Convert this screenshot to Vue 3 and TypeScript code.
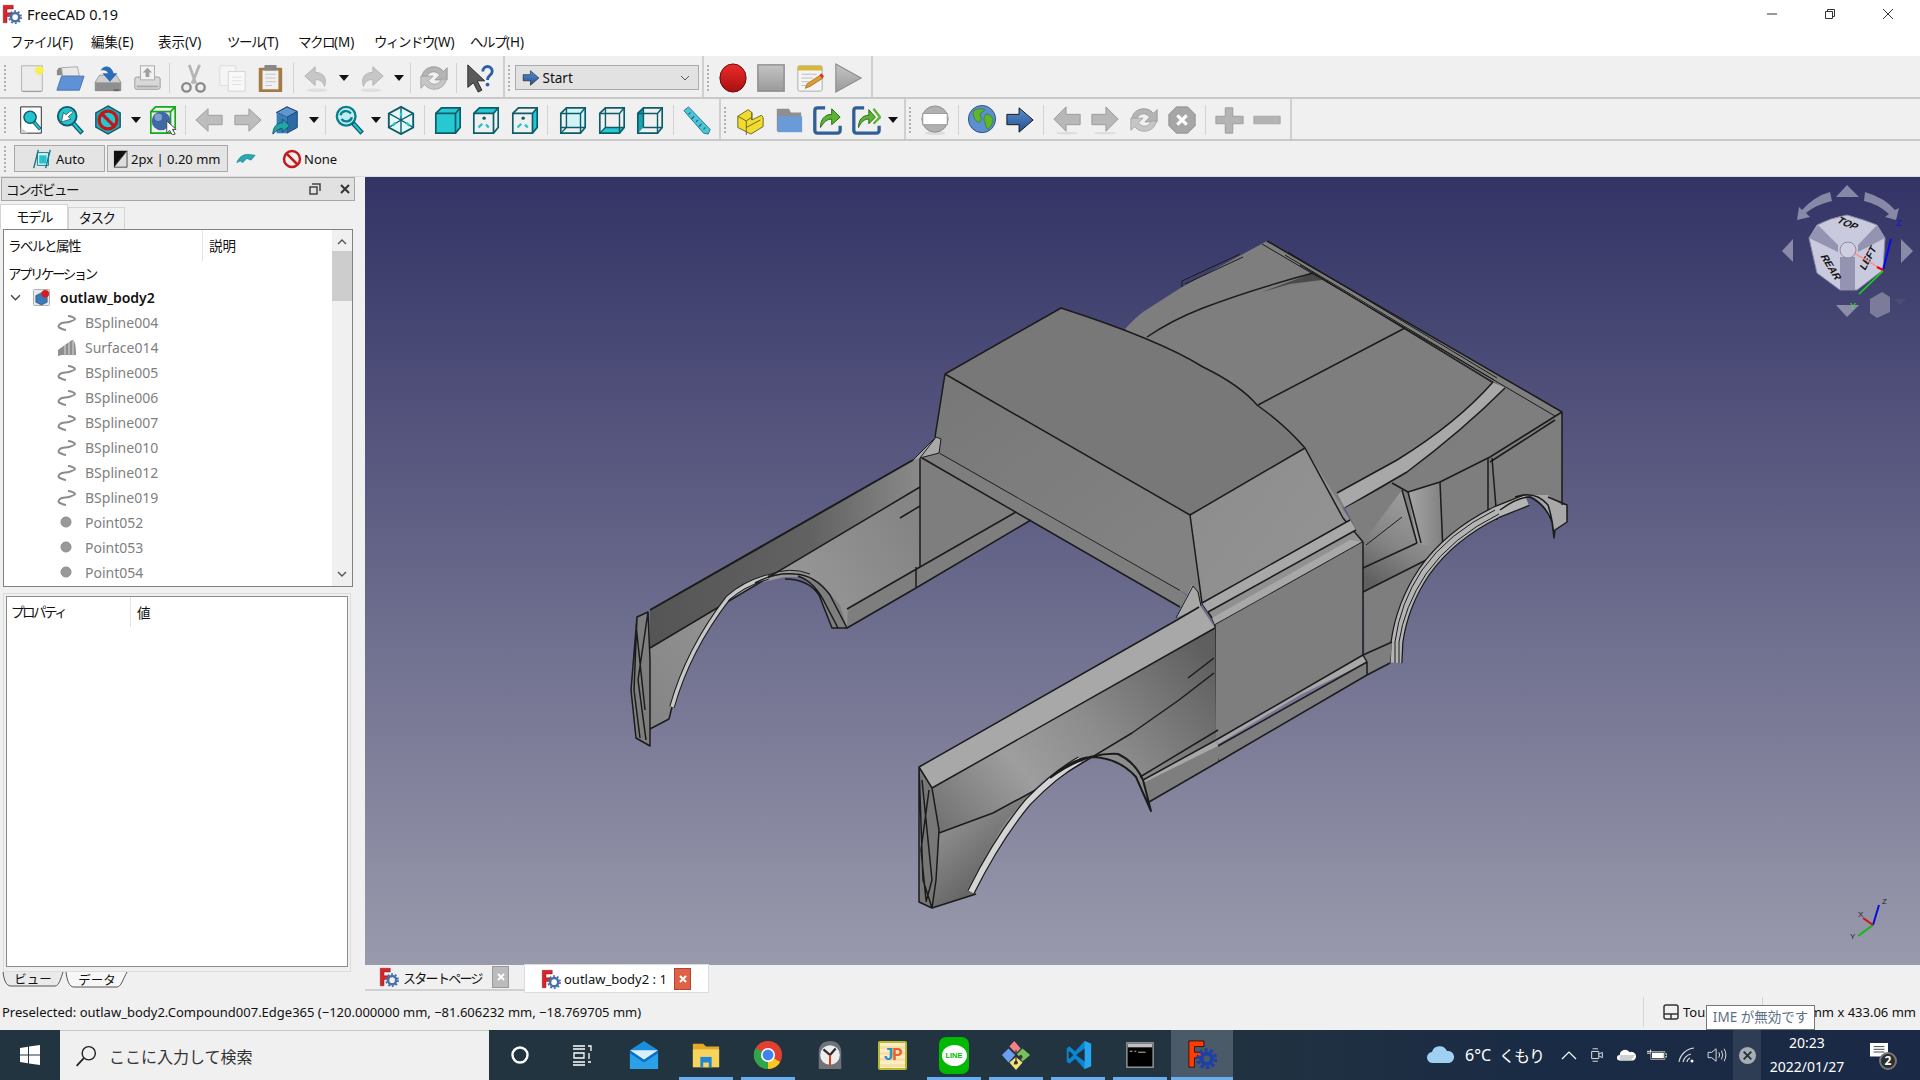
<template>
  <div class="app">
    <!-- sprite for toolbar icons -->
    <svg class="sprite" aria-hidden="true">
      <defs>
        <linearGradient id="redg" x1="0" y1="0" x2="0" y2="1"><stop offset="0" stop-color="#ee2b2b"/><stop offset="1" stop-color="#a80f0f"/></linearGradient>
        <linearGradient id="greyg" x1="0" y1="0" x2="0" y2="1"><stop offset="0" stop-color="#c4c4c4"/><stop offset="1" stop-color="#9a9a9a"/></linearGradient>
        <linearGradient id="blueg" x1="0" y1="0" x2="0" y2="1"><stop offset="0" stop-color="#5a8fcf"/><stop offset="1" stop-color="#24508f"/></linearGradient>

        <symbol id="new" viewBox="0 0 32 32"><rect x="6" y="3" width="22" height="27" fill="#ececec" stroke="#b0b0b0"/><path d="M7 30h20v1H7z" fill="#999"/><circle cx="25" cy="8" r="4.5" fill="#f5ef50"/></symbol>
        <symbol id="open" viewBox="0 0 32 32"><path d="M2 28V8l2-3h9l2 2h9v6H2z" fill="#8a8a8a"/><path d="M7 5l17-1 2 10H8z" fill="#e8e8e8" stroke="#aaa"/><path d="M2 29 7 14h24l-5 15z" fill="#5d92d6" stroke="#4874ad"/></symbol>
        <symbol id="save" viewBox="0 0 32 32"><path d="M2 21h28v9H2z" fill="#8f8f8f"/><path d="M7 13h18l5 8H2z" fill="#cfcfcf" stroke="#999"/><path d="M22 30h6v-2h-6z" fill="#666"/><path d="M8 8c4-7 12-5 14 3h4l-8 9-8-9h6c-1-3-4-4-8-3z" fill="#2a6cb6"/></symbol>
        <symbol id="saveas" viewBox="0 0 32 32"><rect x="3" y="15" width="27" height="13" rx="2" fill="#d8d8d8" stroke="#999"/><rect x="9" y="3" width="15" height="15" fill="#f2f2f2" stroke="#aaa"/><path d="M16.500 5l5 5h-3v5h-4v-5h-3z" fill="#a0a0a0"/><path d="M5 24h23v2H5z" fill="#aaa"/></symbol>
        <symbol id="cut" viewBox="0 0 32 32"><path d="M12 2l7 20M23 2l-8 20" stroke="#b5b5b5" stroke-width="3" fill="none"/><circle cx="9" cy="26" r="4.500" fill="none" stroke="#8a8a8a" stroke-width="2.500"/><circle cx="24" cy="26" r="4.500" fill="none" stroke="#8a8a8a" stroke-width="2.500"/></symbol>
        <symbol id="copy" viewBox="0 0 32 32"><rect x="3" y="3" width="17" height="21" fill="#f5f5f5" stroke="#dcdcdc"/><rect x="12" y="9" width="18" height="21" fill="#f8f8f8" stroke="#d4d4d4"/><path d="M16 15h10M16 19h10M16 23h10" stroke="#dedede"/></symbol>
        <symbol id="paste" viewBox="0 0 32 32"><rect x="4" y="5" width="25" height="26" rx="1" fill="#a57b45"/><rect x="8" y="8" width="17" height="20" fill="#f0f0f0"/><rect x="10" y="2" width="13" height="6" rx="1" fill="#888"/><path d="M11 12h11M11 16h11M11 20h11M11 24h7" stroke="#c2c2c2"/></symbol>
        <symbol id="undo" viewBox="0 0 32 32"><ellipse cx="16" cy="29" rx="11" ry="2" fill="#e0e0e0"/><path d="M14 4 3 14l11 10v-6c4-1 8 1 10 7 3-9-1-15-10-15z" fill="#c6c6c6" stroke="#b4b4b4"/></symbol>
        <symbol id="redo" viewBox="0 0 32 32"><ellipse cx="16" cy="29" rx="11" ry="2" fill="#e0e0e0"/><path d="M18 4l11 10-11 10v-6c-4-1-8 1-10 7-3-9 1-15 10-15z" fill="#c6c6c6" stroke="#b4b4b4"/></symbol>
        <symbol id="sync" viewBox="0 0 32 32"><path d="M3 15C4 4 19 0 26 9l4-4v13H17l5-5c-4-6-12-4-14 2z" fill="#b4b4b4" stroke="#999"/><path d="M29 17c-1 11-16 15-23 6l-4 4V14h13l-5 5c4 6 12 4 14-2z" fill="#c6c6c6" stroke="#a4a4a4"/></symbol>
        <symbol id="help" viewBox="0 0 32 32"><path d="M3 2v24l6-5 5 10 4-2-5-10h8z" fill="#5a5a5a" stroke="#2a2a2a"/><path d="M19 9c0-7 10-7 10 0 0 4-5 4-5 9" fill="none" stroke="#2d5fa5" stroke-width="3"/><circle cx="24" cy="23" r="2" fill="#2d5fa5"/></symbol>

        <symbol id="fitall" viewBox="0 0 32 32"><path d="M5 2h22v28H5z" fill="#fff" stroke="#222"/><path d="M5 24l8 6H5z" fill="#ccc"/><circle cx="15" cy="13" r="6.500" fill="#25c2cf" stroke="#0b5d69" stroke-width="1.500"/><path d="M19 18l7 8" stroke="#0b5d69" stroke-width="4"/><path d="M19.500 18.500l6 7" stroke="#25c2cf" stroke-width="2"/></symbol>
        <symbol id="fitsel" viewBox="0 0 32 32"><circle cx="13" cy="12" r="10" fill="#25c2cf" stroke="#0b5d69" stroke-width="2"/><path d="M19 19l10 11" stroke="#0b5d69" stroke-width="5"/><path d="M20 20l8 9" stroke="#25c2cf" stroke-width="2.500"/><path d="M7 18l2-10 2.500 2.500L17 6l2 2-5 4.500L17 15z" fill="#fff" stroke="#333" stroke-width=".7"/></symbol>
        <symbol id="nodraw" viewBox="0 0 32 32"><path d="M16 1l13 7.500v15L16 31 3 23.500v-15z" fill="#25a9b6" stroke="#0b5d69" stroke-width="1.500"/><circle cx="16" cy="16" r="9.500" fill="#22c8d4" stroke="#c01818" stroke-width="3.500"/><path d="M9 9l14 14" stroke="#c01818" stroke-width="3.500"/></symbol>
        <symbol id="boxsel" viewBox="0 0 32 32"><path d="M3 7h21v23H3zM3 7l5-5h21v22l-5 6M24 7l5-5" fill="none" stroke="#17a81c" stroke-width="1.800"/><circle cx="14" cy="17" r="10" fill="#3f68a4"/><circle cx="11" cy="13" r="4" fill="#7fa0cc"/><path d="M20 17v13l3-3 3 5 3-1-3-5h4z" fill="#fff" stroke="#444"/></symbol>
        <symbol id="larrow" viewBox="0 0 32 32"><path d="M15 4 2 16l13 12v-7h15V11H15z" fill="#bdbdbd" stroke="#9c9c9c"/></symbol>
        <symbol id="rarrow" viewBox="0 0 32 32"><path d="M17 4l13 12-13 12v-7H2V11h15z" fill="#bdbdbd" stroke="#9c9c9c"/></symbol>
        <symbol id="nav3d" viewBox="0 0 32 32"><path d="M6 8l11-6 11 5v17l-11 6V13z" fill="#2d6aa8" stroke="#1b416e"/><path d="M6 8l11 5 11-6-11-5z" fill="#5f96cf" stroke="#1b416e"/><path d="M17 13v17H6V8z" fill="#3f7cbe"/><path d="M2 31c0-7 4-12 10-12v-4l8 7-8 7v-4c-3 0-6 2-10 6z" fill="#22a6a8" stroke="#0d5b5f"/></symbol>
        <symbol id="syncview" viewBox="0 0 32 32"><circle cx="13" cy="12" r="10" fill="#bfeef2" stroke="#0b7f8d" stroke-width="2.500"/><path d="M20 19l10 11" stroke="#0b5d69" stroke-width="5"/><path d="M21 20l8 9" stroke="#25c2cf" stroke-width="2.500"/><path d="M7 11c1-5 8-6 11-2M19 13c-1 5-8 6-11 2" fill="none" stroke="#0b7f8d" stroke-width="2.500"/></symbol>
        <symbol id="iso" viewBox="0 0 32 32"><path d="M16 2l13 7v15l-13 7-13-7V9z" fill="#e6f7f8" stroke="#0b5d69" stroke-width="2"/><path d="M3 9l13 7 13-7M16 16v15M16 2v14M3 24l13-8 13 8" fill="none" stroke="#0b5d69" stroke-width="1.500"/><path d="M7 22l3-3M25 22l-3-3M16 8v4" stroke="#25c2cf" stroke-width="2.500"/></symbol>
        <symbol id="front" viewBox="0 0 32 32"><path d="M3 9l6-6h20v21l-5 6H3z" fill="#28c8d2" stroke="#0b5d69" stroke-width="1.800"/><path d="M3 9h21v21M24 9l5-6" fill="none" stroke="#0b5d69" stroke-width="1.800"/></symbol>
        <symbol id="top" viewBox="0 0 32 32"><path d="M3 9l6-6h20l-5 6z" fill="#28c8d2"/><path d="M3 9l6-6h20v21l-5 6H3z" fill="none" stroke="#0b5d69" stroke-width="1.800"/><path d="M3 9h21v21M24 9l5-6" fill="none" stroke="#0b5d69" stroke-width="1.800"/><circle cx="14" cy="14" r="1.800" fill="#0b5d69"/><path d="M8 24l4-4M19 24l-3-3" stroke="#25c2cf" stroke-width="2.500"/></symbol>
        <symbol id="right" viewBox="0 0 32 32"><path d="M24 9l5-6v21l-5 6z" fill="#28c8d2"/><path d="M3 9l6-6h20v21l-5 6H3z" fill="none" stroke="#0b5d69" stroke-width="1.800"/><path d="M3 9h21v21M24 9l5-6" fill="none" stroke="#0b5d69" stroke-width="1.800"/><circle cx="14" cy="14" r="1.800" fill="#0b5d69"/><path d="M8 24l4-4M19 24l-3-3" stroke="#25c2cf" stroke-width="2.500"/></symbol>
        <symbol id="rear" viewBox="0 0 32 32"><path d="M9 3h20v21H9z" fill="#d3f4f6"/><path d="M3 9l6-6h20v21l-5 6H3z" fill="none" stroke="#0b5d69" stroke-width="1.800"/><path d="M3 9h21v21M24 9l5-6M9 3v21H3M9 24l-6 6M9 24h20" fill="none" stroke="#0b5d69" stroke-width="1.500"/></symbol>
        <symbol id="bottom" viewBox="0 0 32 32"><path d="M3 30l6-6h20l-5 6z" fill="#28c8d2"/><path d="M3 9l6-6h20v21l-5 6H3z" fill="none" stroke="#0b5d69" stroke-width="1.800"/><path d="M3 9h21v21M24 9l5-6M9 3v21M9 24h20M9 24l-6 6" fill="none" stroke="#0b5d69" stroke-width="1.500"/></symbol>
        <symbol id="leftv" viewBox="0 0 32 32"><path d="M3 9l6-6v21l-6 6z" fill="#1ba3ad"/><path d="M3 9l6-6h20v21l-5 6H3z" fill="none" stroke="#0b5d69" stroke-width="1.800"/><path d="M3 9h21v21M24 9l5-6M9 3v21M9 24h20" fill="none" stroke="#0b5d69" stroke-width="1.500"/></symbol>
        <symbol id="measure" viewBox="0 0 32 32"><path d="M2 6l5-4 23 24-2 5-5-1z" fill="#4fc3d8" stroke="#1c7b92"/><path d="M9 8l-2 2M13 12l-3 3M17 16l-2 2M21 20l-3 3M25 24l-2 2" stroke="#146a80" stroke-width="1.200"/></symbol>
        <symbol id="part" viewBox="0 0 32 32"><path d="M3 12l11-7 4 3v8l10-5 2 2v10l-13 8-14-7z" fill="#f0db30" stroke="#6b6420"/><path d="M3 12l9 5v15M12 17l6-4M12 24l15-8M18 8v8" fill="none" stroke="#6b6420"/></symbol>
        <symbol id="folder" viewBox="0 0 32 32"><path d="M3 28V4h13l2 4h11v20z" fill="#8f8f8f"/><path d="M4 12h26v17H4z" fill="#6a9bd8"/></symbol>
        <symbol id="link" viewBox="0 0 32 32"><path d="M14 3H6Q3 3 3 6v21q0 3 3 3h21q3 0 3-3v-5" fill="none" stroke="#2f5f94" stroke-width="3.500"/><path d="M9 24c0-8 4-14 12-14V4l9 9-9 8v-6c-5 0-8 3-12 9z" fill="#5cb531" stroke="#2a6414"/></symbol>
        <symbol id="link2" viewBox="0 0 32 32"><path d="M14 3H6Q3 3 3 6v21q0 3 3 3h21q3 0 3-3v-5" fill="none" stroke="#2f5f94" stroke-width="3.500"/><path d="M8 24c0-8 4-13 11-13V5l7 8-7 7v-5c-5 0-8 3-11 9z" fill="#5cb531" stroke="#2a6414"/><path d="M24 4l7 9-7 7" fill="none" stroke="#5cb531" stroke-width="2.500"/></symbol>
        <symbol id="web" viewBox="0 0 32 32"><ellipse cx="16" cy="30" rx="11" ry="2" fill="#dcdcdc"/><circle cx="16" cy="15" r="14" fill="#b0b0b0" stroke="#8c8c8c"/><rect x="3" y="9" width="26" height="12" fill="#fff" stroke="#999"/></symbol>
        <symbol id="globe" viewBox="0 0 32 32"><circle cx="16" cy="15" r="14.500" fill="#5d8fd0" stroke="#2c4e80"/><path d="M7 6c4-2 8-3 12-1-1 3-5 2-5 5s2 3 1 6-4 3-6 0-3-6-2-10zM20 10c3-1 7 2 8 6-1 5-3 8-6 10-3-3-2-8-4-10 0-3 1-5 2-6z" fill="#5db62c" stroke="#2f6b14" stroke-width=".6"/></symbol>
        <symbol id="go" viewBox="0 0 32 32"><path d="M15 3l15 13-15 13v-8H2V10h13z" fill="url(#blueg)" stroke="#111"/></symbol>
        <symbol id="back" viewBox="0 0 32 32"><path d="M15 2 2 15l13 13v-7h15V10H15z" fill="#b8b8b8" stroke="#999"/><ellipse cx="16" cy="30" rx="12" ry="1.500" fill="#ddd"/></symbol>
        <symbol id="fwd" viewBox="0 0 32 32"><path d="M17 2l13 13-13 13v-7H2V10h15z" fill="#b8b8b8" stroke="#999"/><ellipse cx="16" cy="30" rx="12" ry="1.500" fill="#ddd"/></symbol>
        <symbol id="stop" viewBox="0 0 32 32"><path d="M10 2h12l8 8v12l-8 8H10l-8-8V10z" fill="#a6a6a6" stroke="#8c8c8c"/><path d="M11 11l10 10M21 11 11 21" stroke="#fff" stroke-width="3.500"/></symbol>
        <symbol id="plus" viewBox="0 0 32 32"><path d="M12 3h8v9h11v8H20v10h-8V20H2v-8h10z" fill="#b4b4b4" stroke="#9a9a9a"/></symbol>
        <symbol id="minus" viewBox="0 0 32 32"><path d="M2 12h28v8H2z" fill="#b4b4b4" stroke="#a4a4a4"/></symbol>
        <symbol id="record" viewBox="0 0 32 32"><ellipse cx="16" cy="16" rx="14" ry="15" fill="url(#redg)" stroke="#5e0a0a"/></symbol>
        <symbol id="halt" viewBox="0 0 32 32"><rect x="2" y="2" width="28" height="28" fill="url(#greyg)" stroke="#8d8d8d" stroke-width="1.500"/></symbol>
        <symbol id="macro" viewBox="0 0 32 32"><rect x="3" y="3" width="26" height="27" rx="2" fill="#f4f4f4" stroke="#aaa"/><path d="M3 3h26v5H3z" fill="#d6b93c"/><path d="M7 12h16M7 16h12M7 20h8M7 24h6" stroke="#bbb"/><path d="M11 27l2-5 14-9 3 3-14 9z" fill="#e49a2c" stroke="#8a5a14" stroke-width=".7"/><path d="M26 13l3 3 2-2-3-3z" fill="#d83030"/></symbol>
        <symbol id="play" viewBox="0 0 32 32"><path d="M3 1l27 15L3 31z" fill="url(#greyg)" stroke="#8d8d8d" stroke-width="1.200"/></symbol>
        <symbol id="fclogo" viewBox="0 0 32 32"><path d="M2 2h16v6H8v6h8v6H8v10H2z" fill="#d8252c" stroke="#7a1015" stroke-width=".7"/><circle cx="21" cy="21" r="6.500" fill="none" stroke="#4a70a8" stroke-width="4"/><circle cx="21" cy="21" r="9.500" fill="none" stroke="#4a70a8" stroke-width="3" stroke-dasharray="3 3"/></symbol>
      </defs>
    </svg>

    <header class="title">
      <svg class="title-logo" viewBox="0 0 32 32"><use href="#fclogo"/></svg>
      <span class="title-text">FreeCAD 0.19</span>
      <div class="win-btns">
        <svg viewBox="0 0 12 12"><path d="M1 6h10" stroke="#333"/></svg>
        <svg viewBox="0 0 12 12"><path d="M1.500 3.500h7v7h-7zM3.500 3.500v-2h7v7h-2" fill="none" stroke="#333"/></svg>
        <svg viewBox="0 0 12 12"><path d="M1 1l10 10M11 1 1 11" stroke="#333"/></svg>
      </div>
    </header>

    <nav class="menu">
      <span v-for="m in menus" :key="m.t" class="menu-item"><span :class="{ mkana: m.kana }">{{ m.t }}</span>{{ m.s }}</span>
    </nav>

    <div v-for="(row, r) in toolRows" :key="r" class="toolbar" :class="'toolbar' + r">
      <div v-for="(grp, g) in row" :key="g" class="tgroup">
        <i class="grip"></i>
        <template v-for="(t, i) in grp" :key="i">
          <i v-if="t === '|'" class="sep"></i>
          <i v-else-if="t === '||'" class="sep sep-wide"></i>
          <i v-else-if="t === 'v'" class="drop"></i>
          <i v-else-if="t === 'w'" class="drop drop-narrow"></i>
          <div v-else-if="t === 'combo'" class="combo">
            <svg viewBox="0 0 32 32"><use href="#go"/></svg>
            <span>Start</span>
            <svg class="chev" viewBox="0 0 10 6"><path d="M1 1l4 4 4-4" fill="none" stroke="#555"/></svg>
          </div>
          <span v-else class="tool"><svg viewBox="0 0 32 32"><use :href="'#' + t"/></svg></span>
        </template>
      </div>
    </div>

    <div class="drawbar">
      <i class="grip"></i>
      <div class="dbtn dbtn-auto">
        <svg viewBox="0 0 24 24"><path d="M7 5h12v14H7z" fill="#d8f1f3" stroke="#0f7784"/><path d="M3 22 8 2M16 22l5-20" stroke="#0f7784" stroke-width="1.500"/><path d="M9 8h8v9H9z" fill="#25c2cf"/></svg>
        <span>Auto</span>
      </div>
      <div class="dbtn dbtn-line">
        <svg viewBox="0 0 18 22"><path d="M1 1h16L1 21z" fill="#111"/><path d="M17 1v20H1z" fill="#ddd" stroke="#333"/></svg>
        <span>2px | 0.20 mm</span>
      </div>
      <svg class="bolt" viewBox="0 0 24 14"><path d="M1 12c2-6 7-10 13-10l9 1-5 6-5-2-5 5-3-2z" fill="#25aab5" stroke="#11727c" stroke-width=".6"/></svg>
      <svg class="none-ic" viewBox="0 0 20 20"><circle cx="10" cy="10" r="8" fill="none" stroke="#c41a1a" stroke-width="2.500"/><path d="M4.500 4.500l11 11" stroke="#c41a1a" stroke-width="2.500"/></svg>
      <span class="none-tx">None</span>
    </div>

    <main class="work">
      <aside class="side">
        <div class="dock-title">
          <span class="kana-w">コンボビュー</span>
          <svg class="dock-float" viewBox="0 0 12 12"><path d="M3 1h8v7M1 4h7v7H1z M1 4h7" fill="none" stroke="#444" stroke-width="1.500"/></svg>
          <svg class="dock-close" viewBox="0 0 12 12"><path d="M2 2l8 8M10 2l-8 8" stroke="#333" stroke-width="2"/></svg>
        </div>
        <div class="tabs">
          <span class="tab tab-on kana-w">モデル</span>
          <span class="tab kana-w">タスク</span>
        </div>
        <section class="tree">
          <div class="tree-main">
            <div class="tree-head">
              <span class="th-label kana-w">ラベルと属性</span>
              <span class="th-desc">説明</span>
            </div>
            <div class="row row-app kana">アプリケーション</div>
            <div class="row row-doc">
              <svg class="twist" viewBox="0 0 10 6"><path d="M1 1l4 4 4-4" fill="none" stroke="#444" stroke-width="1.300"/></svg>
              <svg class="doc-ic" viewBox="0 0 18 18"><rect x=".5" y=".5" width="17" height="17" rx="1" fill="#e8e8e8" stroke="#aaa"/><path d="M3 7l6-3 6 3v7l-6 3-6-3z" fill="#3d78b8" stroke="#20466f" stroke-width=".6"/><circle cx="13" cy="5" r="4" fill="#d41e1e"/></svg>
              <span>outlaw_body2</span>
            </div>
            <div v-for="n in nodes" :key="n" class="row row-node">
              <svg v-if="n.startsWith('BSpline')" class="node-ic" viewBox="0 0 20 18"><path d="M11 2c3 0 7 2 7 3s-3 2-6 3-7 0-9 2-2 3 0 4 4 2 6 2" fill="none" stroke="#8c8c8c" stroke-width="2"/></svg>
              <svg v-else-if="n.startsWith('Surface')" class="node-ic" viewBox="0 0 20 18"><path d="M1 11l4-3 10-7c3 0 4 6 4 15H5L1 17z" fill="#8f8f8f"/><path d="M8 6v11M12 3v14M16 2v15" stroke="#dcdcdc"/></svg>
              <svg v-else class="node-ic" viewBox="0 0 20 18"><circle cx="9" cy="8" r="5" fill="#999" stroke="#8a8a8a"/></svg>
              <span>{{ n }}</span>
            </div>
          </div>
          <div class="sbar">
            <svg viewBox="0 0 10 6"><path d="M1 5l4-4 4 4" fill="none" stroke="#555" stroke-width="1.400"/></svg>
            <div class="sb-track"><div class="sb-thumb"></div></div>
            <svg viewBox="0 0 10 6"><path d="M1 1l4 4 4-4" fill="none" stroke="#555" stroke-width="1.400"/></svg>
          </div>
        </section>
        <section class="props">
          <div class="props-in">
            <div class="props-head">
              <span class="ph-a kana">プロパティ</span>
              <span class="ph-b">値</span>
            </div>
          </div>
        </section>
        <svg class="btabs" viewBox="0 0 135 18">
          <path d="M3 0c1 8 3 14 8 14h44c4 0 6-8 8-14" fill="#eaeaea" stroke="#555"/>
          <path d="M66 0c1 8 3 15 8 15h43c4 0 6-8 10-15" fill="#f7f7f7" stroke="#555"/>
          <text x="33" y="12" text-anchor="middle" class="btab-t">ビュー</text>
          <text x="97" y="13" text-anchor="middle" class="btab-t">データ</text>
        </svg>
      </aside>

      <div class="mdi">
        <div class="view">
          <!-- the model and nav cube are free canvas content -->
          <svg class="canvas" viewBox="365 177 1555 788">
            <defs>
              <linearGradient id="lfTop" gradientUnits="userSpaceOnUse" x1="650" y1="0" x2="920" y2="0"><stop offset="0" stop-color="#555"/><stop offset=".6" stop-color="#626262"/><stop offset="1" stop-color="#8a8a8a"/></linearGradient>
              <linearGradient id="lfLow" gradientUnits="userSpaceOnUse" x1="650" y1="700" x2="920" y2="540"><stop offset="0" stop-color="#868686"/><stop offset=".5" stop-color="#9a9a9a"/><stop offset="1" stop-color="#858585"/></linearGradient>
              <linearGradient id="ffLow" gradientUnits="userSpaceOnUse" x1="960" y1="880" x2="1214" y2="660"><stop offset="0" stop-color="#6a6a6a"/><stop offset=".35" stop-color="#9e9e9e"/><stop offset=".6" stop-color="#8c8c8c"/><stop offset="1" stop-color="#5f5f5f"/></linearGradient>
              <linearGradient id="ffLowB" gradientUnits="userSpaceOnUse" x1="945" y1="830" x2="995" y2="890"><stop offset="0" stop-color="#8c8c8c"/><stop offset="1" stop-color="#5e5e5e"/></linearGradient>
              <linearGradient id="roofG" gradientUnits="userSpaceOnUse" x1="1060" y1="310" x2="1200" y2="510"><stop offset="0" stop-color="#787878"/><stop offset="1" stop-color="#828282"/></linearGradient>
              <linearGradient id="cabF" gradientUnits="userSpaceOnUse" x1="1200" y1="520" x2="1340" y2="620"><stop offset="0" stop-color="#8e8e8e"/><stop offset="1" stop-color="#949494"/></linearGradient>
              <linearGradient id="rqG" gradientUnits="userSpaceOnUse" x1="1375" y1="585" x2="1420" y2="510"><stop offset="0" stop-color="#606060"/><stop offset=".5" stop-color="#858585"/><stop offset="1" stop-color="#9a9a9a"/></linearGradient>
              <linearGradient id="rwG" gradientUnits="userSpaceOnUse" x1="1405" y1="500" x2="1445" y2="500"><stop offset="0" stop-color="#aaa"/><stop offset="1" stop-color="#7e7e7e"/></linearGradient>
            </defs>

            <!-- rear deck -->
            <path class="fill-m" d="M1125 329 Q1135 318 1143 312 L1182 287 L1267 241 L1562 412 L1490 457 L1440 482 L1408 492 L1392 483 L1345 508 L1300 500 L1200 400 Z"/>
            <path class="line thin" d="M1182 287 V281 L1240 254 M1185 284 L1243 257"/>
            <path class="fill-d" d="M1262 292 L1313 273 L1322 280 L1290 284 Z"/>
            <path class="line" d="M1147 337 Q1172 320 1203 308 Q1250 290 1313 273"/>
            <path class="line thin" d="M1285 255 L1494 380 M1288 252 L1497 378 M1313 273 L1493 383 M1300 265 L1498 385 M1262 244 L1555 416"/>
            <path class="line" d="M1258 405 L1405 328"/>
            <path class="fill-l" d="M1493 382 Q1457 423 1397 460 L1337 493 L1345 508 L1407 472 Q1463 430 1505 388 Z"/>
            <path class="line" d="M1493 382 Q1457 423 1397 460 L1337 493 M1505 388 Q1463 430 1407 472 L1345 508"/>

            <!-- rear quarter -->
            <path class="fill-m" d="M1490 457 L1562 412 V505 L1530 495 L1497 512 L1457 537 L1424 572 L1402 605 L1396 642 L1365 655 L1363 542 L1345 508 L1392 483 L1408 492 L1440 482 Z"/>
            <path d="M1363 542 L1402 490 L1417 543 L1363 568 Z" fill="url(#rqG)"/>
            <path d="M1408 492 L1440 482 L1443 552 L1417 543 Z" fill="url(#rwG)"/>
            <path d="M1363 568 L1417 543 L1442 552 L1363 592 Z" fill="url(#rqG)"/>
            <path class="line" d="M1267 241 L1562 412 L1490 457 L1440 482 L1408 492 L1392 483 M1562 412 V505"/>
            <path class="line" d="M1402 490 L1417 543 M1408 492 L1421 543 M1363 568 L1417 543 M1363 592 L1442 552 M1440 482 L1443 552 M1488 458 V520 M1492 458 L1497 520 M1490 462 L1555 420"/>
            <path class="line thin" d="M1366 545 L1402 517"/>

            <!-- rear wheel arch -->
            <path class="bar-o" d="M1396 663 L1397 642 Q1402 605 1424 572 Q1450 535 1497 512 L1527 500"/>
            <path class="bar-i" d="M1396 663 L1397 642 Q1402 605 1424 572 Q1450 535 1497 512 L1527 500"/>
            <path class="line thin" d="M1395 663 L1395 642 Q1400 603 1422 570 Q1448 533 1495 510 M1399 663 L1399 642 Q1404 607 1426 574 Q1452 537 1499 514"/>
            <path class="fill-l" d="M1562 505 L1567 505 V522 L1555 530 L1554 538 L1552 522 Q1548 505 1530 495 L1548 495 Z"/>
            <path class="line" d="M1548 497 L1567 505 V522 L1555 530 L1554 538 L1552 522 Q1546 505 1530 497 Q1518 497 1500 510 M1515 497 Q1535 490 1548 505 Q1553 520 1554 538"/>
            <path class="fill-m" d="M1363 655 L1392 642 L1390 663 L1367 675 Z"/>
            <path class="line" d="M1363 655 L1392 642 M1390 663 L1367 675"/>

            <!-- left side inner wall -->
            <path class="fill-m" d="M920 458 L939 453 L1180 590 L1200 610 L1180 607 L1031 520 L916 588 Z"/>
            <path class="line" d="M922 458 L1180 607 M940 453 L1180 590 M920 567 L1016 512 M916 588 L1031 520"/>

            <!-- left fender -->
            <path d="M650 610 L913 460 L920 458 L920 487 L650 648 Z" fill="url(#lfTop)"/>
            <path d="M650 648 L920 487 L920 567 L916 588 L847 628 L832 627 L819 593 L802 577 H785 L750 585 L728 598 L702 637 L681 677 L672 707 L669 719 L648 730 Z" fill="url(#lfLow)"/>
            <path class="fill-m" d="M847 628 L916 588 L920 567 L848 609 Z"/>
            <path class="line heavy" d="M650 610 L913 460"/>
            <path class="line" d="M650 648 L920 487 M920 458 V567 M916 567 V588 M847 628 L916 588 M847 609 L920 567 M900 518 L920 506"/>
            <path class="bar-o thin-bar" d="M672 707 Q688 650 728 598 Q745 583 768 577"/>
            <path class="bar-i thin-bar" d="M672 707 Q688 650 728 598 Q745 583 768 577"/>
            <path class="fill-m" d="M802 577 L819 593 L832 627 L847 628 L840 605 L820 582 Z"/>
            <path class="line" d="M669 719 L648 730 M669 719 L672 707 M755 583 Q775 572 795 574 Q815 575 830 595 L847 628 H832 L819 595 Q808 579 785 579 M798 576 Q815 582 826 605 L838 628"/>
            <path class="line thin" d="M768 575 Q790 566 810 574"/>
            <path class="fill-m" d="M637 617 L648 612 L650 660 V746 L636 738 L631 690 Z"/>
            <path class="line" d="M637 617 L648 612 L650 660 V746 L636 738 L631 690 Z M637 617 L634 690 L640 738 M648 612 L638 680 L646 740 M636 625 L645 710"/>

            <!-- cabin -->
            <path d="M935 437 L945 374 L1190 515 L1202 603 L1180 590 L940 453 Z" fill="url(#roofG)"/>
            <path d="M1061 308 Q1160 340 1203 367 Q1240 385 1257 405 L1305 448 L1190 515 L945 374 Z" fill="#787878"/>
            <path d="M1190 515 L1305 448 L1350 520 L1363 542 L1215 625 L1212 618 L1202 603 Z" fill="url(#cabF)"/>
            <path class="line" d="M945 374 L1061 308 Q1160 340 1203 367 Q1240 385 1257 405 Q1285 425 1305 448 L1190 515 L945 374 L935 437 M1190 515 L1202 603 L1212 618 L1215 625 M1305 448 L1343 518 L1363 542"/>
            <path class="fill-l" d="M936 437 L941 439 L939 453 L913 460 Z"/>
            <path class="line thin" d="M936 437 L941 439 L939 453 L920 458 Z M936 437 L913 460"/>
            <path class="fill-l" d="M1197 590 L1192 585 L1176 618 L1201 607 Z"/>
            <path class="line thin" d="M1193 586 L1198 592 L1201 606 M1193 586 L1176 618"/>

            <!-- cabin side strip -->
            <path class="fill-l" d="M1212 618 L1350 540 L1363 542 L1215 625 Z"/>
            <path class="fill-l" d="M1202 603 L1350 520 L1356 530 L1208 612 Z"/>
            <path class="line" d="M1202 603 L1350 520 M1208 612 L1356 530 M1215 625 L1363 542"/>

            <!-- front door -->
            <path class="fill-m" d="M1215 625 L1363 542 V655 L1215 740 Z"/>
            <path class="fill-l" d="M1216 740 L1363 655 L1367 662 L1300 695 L1218 744 Z"/>
            <path class="fill-m" d="M1218 746 L1367 662 V675 L1218 762 Z"/>
            <path class="line" d="M1215 625 V740 L1218 762 M1363 542 V655 L1367 662 V675 M1216 740 L1363 655 M1218 746 L1367 662 M1218 762 L1367 675"/>

            <!-- front fender -->
            <path class="fill-l" d="M919 767 L1177 620 L1201 607 L1215 628 L932 788 Z"/>
            <path d="M932 788 L1215 628 L1216 740 L1143 780 L1151 811 L1136 777 Q1119 758 1088 758 Q1054 766 1023 800 Q1000 830 976 873 L967 890 L976 894 L932 908 L936 880 L937 830 Z" fill="url(#ffLow)"/>
            <path d="M939 833 L993 813 L1054 780 Q1020 800 1000 830 L976 873 L967 890 L976 894 L932 908 L936 880 Z" fill="url(#ffLowB)"/>
            <path class="fill-l" d="M1143 780 L1216 740 L1218 746 L1149 802 Z"/>
            <path class="fill-m" d="M1149 802 L1218 762 L1218 746 L1143 783 Z"/>
            <path class="line" d="M919 767 L1177 620 L1199 607 M932 788 L1215 628 M939 833 L993 813 L1054 780 L1132 733 L1179 700 L1214 673 M1188 678 L1214 658"/>
            <path class="bar-o mid-bar" d="M971 892 Q998 838 1028 802 Q1055 774 1080 760"/>
            <path class="bar-i mid-bar pale" d="M971 892 Q998 838 1028 802 Q1055 774 1080 760"/>
            <path class="line heavy" d="M1050 778 Q1085 752 1118 754 Q1135 762 1143 780 L1151 811 L1136 777 Q1119 758 1092 757 Q1075 757 1050 778"/>
            <path class="line" d="M1143 780 L1216 740 M1149 802 L1218 762 M1140 777 L1218 730"/>
            <path d="M919 767 L932 788 L939 830 L936 880 L932 908 L919 902 Z" fill="#777"/>
            <path class="line" d="M919 767 L932 788 L939 830 L936 880 L932 908 L919 902 Z M976 894 L932 908 M919 767 L923 880 L932 908 M922 780 L932 880 L926 902 M929 790 L921 850 L926 900"/>

            <!-- nav cube -->
            <g class="nav">
              <path d="M1847 185 L1836 197 H1859 Z M1782 251 L1793 239 V262 Z M1913 251 L1901 239 V263 Z M1847 317 L1836 305 H1859 Z"/>
              <path d="M1830 192 L1832 201 Q1815 205 1806 213 L1810 217 L1797 220 L1799 207 L1802 210 Q1815 196 1830 192 Z"/>
              <path d="M1865 192 Q1885 198 1895 210 L1899 208 L1896 220 L1885 217 L1889 214 Q1878 204 1864 201 Z"/>
            </g>
            <path class="cube" d="M1847 215 Q1865 220 1877 225 L1885 238 L1883 270 L1857 290 H1840 L1817 273 L1809 238 L1817 225 Q1830 218 1847 215 Z"/>
            <path class="cube-band" d="M1809 238 L1818 225 L1838 245 V252 Z M1877 225 L1885 238 L1858 252 V245 Z M1840 290 H1855 V257 H1840 Z"/>
            <circle cx="1848" cy="250" r="8" class="cube-hub"/>
            <text class="cube-t" transform="translate(1836 222) rotate(24) skewX(-20)">TOP</text>
            <text class="cube-t" transform="translate(1820 256) rotate(58) skewX(-20)">REAR</text>
            <text class="cube-t" transform="translate(1865 271) rotate(-62) skewX(-10)">LEFT</text>
            <path d="M1883 270 L1891 239" stroke="#0a0aee" stroke-width="2"/>
            <path d="M1883 271 L1859 294" stroke="#0ee60e" stroke-width="1.400"/>
            <path d="M1854 253 L1883 270" stroke="#ff8a8a" stroke-width="1.400"/>
            <path d="M1877 267 L1883 270" stroke="#e00" stroke-width="2"/>
            <text x="1896" y="226" class="axis-t blue">Z</text>
            <text x="1850" y="309" class="axis-t green">Y</text>
            <path d="M1870 299 L1882 292 L1890 297 V312 L1877 318 L1870 313 Z" fill="#7c7c9a"/>
            <path d="M1894 299 H1906 L1900 305 Z" fill="#4d4d6e"/>

            <!-- axis cross -->
            <path d="M1873 925 L1879 905" stroke="#0c0cd8" stroke-width="2"/>
            <path d="M1873 925 L1858 936" stroke="#11b911" stroke-width="2"/>
            <path d="M1873 925 L1863 918" stroke="#cf1111" stroke-width="2"/>
            <text x="1882" y="904" class="axis-s">Z</text>
            <text x="1850" y="939" class="axis-s">Y</text>
            <text x="1858" y="917" class="axis-s">X</text>
          </svg>
        </div>
        <div class="doctabs">
          <div class="dtab dtab-start">
            <svg viewBox="0 0 32 32"><use href="#fclogo"/></svg>
            <span class="kana-d">スタートページ</span>
            <i class="dclose"><svg viewBox="0 0 10 10"><path d="M2 2l6 6M8 2 2 8" stroke="#fff" stroke-width="2"/></svg></i>
          </div>
          <div class="dtab dtab-active">
            <svg viewBox="0 0 32 32"><use href="#fclogo"/></svg>
            <span>outlaw_body2 : 1</span>
            <i class="dclose red"><svg viewBox="0 0 10 10"><path d="M2 2l6 6M8 2 2 8" stroke="#fff" stroke-width="2"/></svg></i>
          </div>
        </div>
      </div>
    </main>

    <footer class="status">
      <span class="st-msg">Preselected: outlaw_body2.Compound007.Edge365 (−120.000000 mm, −81.606232 mm, −18.769705 mm)</span>
      <div class="st-nav">
        <svg viewBox="0 0 16 16"><rect x="1" y="1" width="14" height="14" rx="2" fill="none" stroke="#333" stroke-width="1.500"/><path d="M1 10h14M8 10v5" stroke="#333" stroke-width="1.500"/></svg>
        <span>Tou</span>
      </div>
      <div class="st-dim">mm x 433.06 mm</div>
      <div class="ime-tip">IME が無効です</div>
    </footer>

    <div class="taskbar">
      <svg class="win" viewBox="0 0 20 20"><path d="M0 3l8-1.200V9.500H0zM9 1.600 20 0v9.500H9zM0 10.500h8v7.700L0 17zM9 10.500h11V20L9 18.400z" fill="#fff"/></svg>
      <div class="search">
        <svg viewBox="0 0 20 20"><circle cx="12.500" cy="7.500" r="6" fill="none" stroke="#222" stroke-width="1.300"/><path d="M8 12l-6.500 7" stroke="#222" stroke-width="1.600"/></svg>
        <span>ここに入力して検索</span>
      </div>
      <div class="tb-ic tb-plain"><svg viewBox="0 0 24 24"><circle cx="12" cy="12" r="7.500" fill="none" stroke="#fff" stroke-width="2.400"/></svg></div>
      <div class="tb-ic tb-plain"><svg viewBox="0 0 24 24"><path d="M3 3h12M3 6h12M4 10h10v5H4zM3 19h12M3 22h12M18 3h3v5M19 10v6M18 19h3" fill="none" stroke="#fff" stroke-width="1.300"/></svg></div>
      <div class="tb-ic"><svg viewBox="0 0 32 32"><path d="M1 11 16 1l15 10v20H1z" fill="#1c8fdb"/><path d="M1 11h30L16 21z" fill="#d8eefa"/><path d="M1 11l15 10 15-10v20H1z" fill="#0f6fc6"/><path d="M1 14l15 10 15-10v17H1z" fill="#2aa0e8"/></svg></div>
      <div class="tb-ic on"><svg viewBox="0 0 32 32"><path d="M2 4h11l3 3h14v22H2z" fill="#e2a92a"/><path d="M2 10h28v19H2z" fill="#f7d45c"/><path d="M10 18h12v11H10z" fill="#1f86d9"/><path d="M13 24h6v5h-6z" fill="#f7d45c"/></svg></div>
      <div class="tb-ic on"><svg viewBox="0 0 32 32"><circle cx="16" cy="16" r="15" fill="#e2402f"/><path d="M16 16 29 23.500A15 15 0 0 1 16 31z" fill="#f7c824"/><path d="M16 16 16 31A15 15 0 0 1 3 8.500z" fill="#30a64a"/><circle cx="16" cy="16" r="7.500" fill="#fff"/><circle cx="16" cy="16" r="5.800" fill="#3f84ee"/></svg></div>
      <div class="tb-ic"><svg viewBox="0 0 32 32"><path d="M4 31V13C4 5 9 1 16 1s12 4 12 12v18z" fill="#6f7276"/><circle cx="16" cy="16" r="10.500" fill="#ecedef"/><path d="M16 16 9 10M16 16l6-7" stroke="#2a2a2a" stroke-width="2.400"/><path d="M16 16v11" stroke="#d8401c" stroke-width="2.200"/></svg></div>
      <div class="tb-ic"><div class="jp-ic"><span class="jp-j">J</span><span class="jp-p">P</span></div></div>
      <div class="tb-ic on"><div class="line-ic"><span>LINE</span></div></div>
      <div class="tb-ic on"><svg viewBox="0 0 32 32"><path d="M16 14 9 7l5-6 7 8z" fill="#f08484"/><path d="M15 16 8 9 1 16l7 8z" fill="#6e9df2"/><path d="M17 15l6-6 8 7-8 7z" fill="#77c05c"/><path d="M16 18l7 6-7 8-7-8z" fill="#f4e27c"/><path d="M16 11v12M16 23l-2 3M16 16l5 4" stroke="#333" stroke-width="1.300"/><circle cx="16" cy="24" r="2" fill="#333"/><circle cx="21" cy="18" r="2" fill="#333"/></svg></div>
      <div class="tb-ic on"><svg viewBox="0 0 32 32"><path d="M23 1 30 4v24l-7 3-10-11-6 5-3-1.500V8.500L7 7l6 5z" fill="#0a85cf"/><path d="M23 1l7 3v24l-7 3z" fill="#26a6ef"/><path d="M23 9v14l-9-7z" fill="#22303c"/><path d="M7 12l-1 1v6l1 1 4-4z" fill="#22303c"/></svg></div>
      <div class="tb-ic on"><svg viewBox="0 0 32 32"><rect x="2" y="3" width="28" height="26" fill="#000" stroke="#999" stroke-width="1.500"/><rect x="3" y="3.800" width="26" height="4" fill="#c0c0c0"/><path d="M5 12h3M10 12h2M14 13h8" stroke="#ccc"/></svg></div>
      <div class="tb-ic on active"><svg viewBox="0 0 32 32"><path d="M2 1h16v6H8v6h8v6H8v10H2z" fill="#ff3d00" stroke="#301010"/><circle cx="21" cy="20" r="5.500" fill="none" stroke="#1c3fa8" stroke-width="4"/><circle cx="21" cy="20" r="9.500" fill="none" stroke="#1c3fa8" stroke-width="3.500" stroke-dasharray="3.500 2.500"/></svg></div>

      <div class="tray">
        <svg class="t-cloud" viewBox="0 0 28 18"><path d="M6 17a5.500 5.500 0 0 1-1-11A8 8 0 0 1 20 5a6 6 0 0 1 2 12z" fill="#9fd0f2"/></svg>
        <span class="t-temp">6°C</span>
        <span class="t-cond">くもり</span>
        <svg class="t-chev" viewBox="0 0 16 10"><path d="M1 9l7-7 7 7" fill="none" stroke="#fff" stroke-width="1.200"/></svg>
        <svg class="t-ic" viewBox="0 0 18 18"><path d="M3 5h8v8H3zM11 8l4-2v6l-4-2M4 2h6M4 16h6" fill="none" stroke="#ddd" stroke-width="1.100"/></svg>
        <svg class="t-ic" viewBox="0 0 22 14"><path d="M3 13a3 3 0 0 1 0-6A6 6 0 0 1 14 4a4.500 4.500 0 0 1 4 9z" fill="#fff"/><path d="M3 7h17l-5 6H3z" fill="#cfcfcf"/></svg>
        <svg class="t-ic" viewBox="0 0 22 14"><rect x="4" y="3" width="16" height="9" fill="#fff"/><rect x="5" y="4" width="14" height="7" fill="none" stroke="#333"/><path d="M0 3h4M0 5h4M20 6h2v3h-2M4 1v3" stroke="#fff"/></svg>
        <svg class="t-ic" viewBox="0 0 18 16"><path d="M1 15C2 8 8 2 16 1M5 15c1-4 4-7 8-8M9 15c0-2 1-3 3-4" fill="none" stroke="#ddd" stroke-width="1.100"/><circle cx="14" cy="14" r="1.500" fill="#fff"/></svg>
        <svg class="t-ic" viewBox="0 0 22 18"><path d="M1 6h4l5-4v14l-5-4H1zM13 6q2 3 0 6M16 4q3 5 0 10M19 2q4 7 0 14" fill="none" stroke="#ddd" stroke-width="1.100"/></svg>
        <div class="t-ime"><svg viewBox="0 0 20 20"><circle cx="10" cy="10" r="9" fill="#a8adb5"/><path d="M6 6l8 8M14 6l-8 8" stroke="#233" stroke-width="2"/></svg></div>
        <div class="t-clock"><span>20:23</span><span>2022/01/27</span></div>
        <div class="t-note">
          <svg viewBox="0 0 20 20"><path d="M0 0h20v15H0z" fill="#fff"/><path d="M4 4h12M4 7h12M4 10h12" stroke="#333"/></svg>
          <span class="t-badge">2</span>
        </div>
      </div>
    </div>
  </div>
</template>

<script setup lang="ts">
const menus = [
  { t: 'ファイル', s: '(F)', kana: true },
  { t: '編集', s: '(E)', kana: false },
  { t: '表示', s: '(V)', kana: false },
  { t: 'ツール', s: '(T)', kana: true },
  { t: 'マクロ', s: '(M)', kana: true },
  { t: 'ウィンドウ', s: '(W)', kana: true },
  { t: 'ヘルプ', s: '(H)', kana: true },
]

const toolRows: string[][][] = [
  [
    ['new', 'open', 'save', 'saveas', '|', 'cut', 'copy', 'paste', '|', 'undo', 'v', 'redo', 'v', '|', 'sync', '|', 'help'],
    ['combo'],
    ['record', 'halt', 'macro', 'play'],
  ],
  [
    ['fitall', 'fitsel', 'nodraw', 'v', 'boxsel', '|', 'larrow', 'rarrow', 'nav3d', 'v', '|', 'syncview', 'w', 'iso', '|', 'front', 'top', 'right', '||', 'rear', 'bottom', 'leftv', '|', 'measure'],
    ['part', 'folder', 'link', 'link2', 'v'],
    ['web', '|', 'globe', 'go', '|', 'back', 'fwd', 'sync', 'stop', '|', 'plus', 'minus'],
  ],
]

const nodes = [
  'BSpline004', 'Surface014', 'BSpline005', 'BSpline006', 'BSpline007',
  'BSpline010', 'BSpline012', 'BSpline019', 'Point052', 'Point053', 'Point054',
]
</script>

<style>
html, body { margin: 0; padding: 0; background: #f0f0f0; }
</style>

<style scoped>
.app {
  width: 1920px;
  height: 1080px;
  overflow: hidden;
  display: flex;
  flex-direction: column;
  background: #f0f0f0;
  color: #111;
  font-family: "Noto Sans", "Noto Sans CJK JP", sans-serif;
  font-size: 14px;
  position: relative;
}
.sprite { position: absolute; width: 0; height: 0; }
.kana { letter-spacing: -2.500px; }
.kana-w { letter-spacing: -1.500px; }
.kana-d { letter-spacing: -1.700px; }

.title { height: 30px; background: #fff; display: flex; align-items: center; padding-bottom: 2px; box-sizing: border-box; }
.title-logo { width: 20px; height: 20px; margin-left: 2px; }
.title-text { margin-left: 5px; font-size: 14.5px; }
.win-btns { margin-left: auto; display: flex; gap: 46px; padding-right: 26px; }
.win-btns svg { width: 12px; height: 12px; }

.menu { height: 26px; background: #fff; display: grid; grid-template-columns: 81px 67px 69px 71px 76px 96px auto; align-items: center; padding: 0 0 4px 10px; font-size: 13.5px; box-sizing: border-box; white-space: nowrap; }
.mkana { letter-spacing: -1.500px; }

.toolbar { height: 41px; display: flex; border-bottom: 2px solid #c8c8c8; background: #f0f0f0; box-sizing: content-box; }
.toolbar1 { height: 40px; }
.tgroup { display: flex; align-items: center; padding: 2px 3px 0 0; border-right: 2px solid #cfcfcf; margin-right: -1px; }
.tgroup + .tgroup .grip { width: 11px; }
.grip { display: block; width: 12px; flex: none; height: 26px; box-sizing: border-box; border-left: 2px dotted #b0b0b0; transform: translateX(4px); }
.tool { width: 38.500px; flex: none; display: flex; justify-content: center; }
.tool svg { width: 30px; height: 30px; display: block; }
.sep { display: block; width: 1px; height: 30px; background: #d2d2d2; margin: 0 4px 0 3px; flex: none; }
.sep-wide { margin: 0 6px 0 3px; }
.drop { display: block; flex: none; width: 16px; height: 6px; position: relative; }
.drop::after { content: ""; position: absolute; left: 3px; top: 0; border-left: 5px solid transparent; border-right: 5px solid transparent; border-top: 6px solid #111; }
.drop-narrow { width: 14px; }
.combo { width: 184px; height: 25px; box-sizing: border-box; border: 1px solid #aaa; background: #e2e2e2; display: flex; align-items: center; padding: 0 6px; gap: 3px; font-size: 13.500px; }
.combo svg { width: 18px; height: 18px; }
.combo .chev { width: 10px; height: 6px; margin-left: auto; margin-right: 2px; }

.drawbar { height: 35px; display: flex; align-items: center; position: relative; }
.drawbar .grip { width: 14px; }
.dbtn { height: 27px; box-sizing: border-box; border: 1px solid #a8a8a8; background: #e4e4e4; display: flex; align-items: center; font-size: 13px; white-space: nowrap; }
.dbtn svg { flex: none; }
.dbtn-auto { width: 91px; padding-left: 16px; gap: 3px; }
.dbtn-auto svg { width: 22px; height: 22px; }
.dbtn-line { width: 121px; margin-left: 2px; padding-left: 5px; gap: 3px; }
.dbtn-line svg { width: 15px; height: 18px; }
.bolt { width: 20px; height: 13px; margin-left: 8px; }
.none-ic { width: 20px; height: 20px; margin-left: 26px; }
.none-tx { margin-left: 2px; font-size: 13px; }

.work { flex: none; height: 816px; display: flex; border-top: 1px solid #dcdcdc; }
.side { width: 358px; flex: none; display: flex; flex-direction: column; background: #f0f0f0; }
.dock-title { height: 24px; box-sizing: border-box; margin: 0 0 0 1px; width: 354px; border: 1px solid #a6a6a6; background: #e1e1e1; display: flex; align-items: center; padding-left: 4px; font-size: 13.500px; }
.dock-float { width: 12px; height: 12px; margin-left: auto; }
.dock-close { width: 12px; height: 12px; margin: 0 3px 0 18px; }
.tabs { height: 28px; display: flex; align-items: flex-end; padding-top: 2px; box-sizing: border-box; }
.tab { height: 22px; width: 57px; box-sizing: border-box; border: 1px solid #d4d4d4; border-bottom: 0; text-align: center; font-size: 13.500px; line-height: 21px; background: #f0f0f0; }
.tab-on { width: 68px; height: 25px; background: #fff; line-height: 24px; }
.tree { height: 358px; width: 350px; margin-left: 3px; box-sizing: border-box; border: 1px solid #828282; background: #fff; display: flex; }
.tree-main { flex: 1; min-width: 0; overflow: hidden; }
.tree-head { height: 31px; display: flex; align-items: center; font-size: 13.500px; }
.th-label { width: 199px; padding-left: 4px; box-sizing: border-box; border-right: 1px solid #e4e4e4; height: 100%; line-height: 33px; flex: none; }
.th-desc { padding-left: 6px; height: 100%; line-height: 33px; }
.row { height: 25px; display: flex; align-items: center; white-space: nowrap; }
.row-app { padding-left: 4px; font-size: 13.500px; margin-top: -1px; }
.row-doc { font-weight: 600; }
.twist { width: 11px; height: 7px; margin-left: 6px; }
.doc-ic { width: 17px; height: 17px; margin-left: 12px; margin-right: 10px; }
.row-node { color: #808080; padding-left: 53px; }
.node-ic { width: 20px; height: 18px; margin-right: 8px; }
.sbar { width: 20px; flex: none; background: #f0f0f0; display: flex; flex-direction: column; align-items: center; padding: 9px 0; box-sizing: border-box; }
.sbar > svg { width: 10px; height: 6px; flex: none; }
.sb-track { flex: 1; width: 100%; padding-top: 6px; }
.sb-thumb { height: 50px; background: #cdcdcd; width: 100%; }
.props { height: 379px; width: 348px; margin: 6px 0 0 3px; box-sizing: border-box; border: 1px solid #dcdcdc; padding: 2px 2px 4px 2px; }
.props-in { height: 100%; box-sizing: border-box; border: 1px solid #8c8c8c; background: #fff; }
.props-head { height: 30px; display: flex; align-items: center; font-size: 13.500px; }
.ph-a { width: 124px; height: 100%; line-height: 30px; box-sizing: border-box; padding-left: 4px; border-right: 1px solid #e4e4e4; }
.ph-b { padding-left: 6px; }
.btabs { width: 135px; height: 18px; flex: none; }
.btab-t { font-size: 12.500px; fill: #111; }

.mdi { flex: 1; min-width: 0; margin-left: 7px; display: flex; flex-direction: column; }
.view { height: 788px; background: linear-gradient(#333366, #9a9aad); }
.canvas { display: block; width: 1555px; height: 788px; }
.line { fill: none; stroke: #1b1b1b; stroke-width: 1.500; stroke-linejoin: round; }
.thin { stroke-width: 1; }
.heavy { stroke-width: 2; }
.fill-m { fill: #7e7e7e; }
.fill-l { fill: #a8a8a8; }
.fill-d { fill: #4a4a4a; }
.bar-o { fill: none; stroke: #1b1b1b; stroke-width: 13; }
.bar-i { fill: none; stroke: #b4b4b4; stroke-width: 10.500; }
.bar-o.thin-bar { stroke-width: 5.500; }
.bar-i.thin-bar { stroke-width: 3.500; stroke: #c8c8c8; }
.bar-o.mid-bar { stroke-width: 8; }
.bar-i.mid-bar { stroke-width: 5.500; }
.pale { stroke: #d4d4d4; }
.nav { fill: rgba(185, 185, 205, .62); }
.cube { fill: #cacade; stroke: #8a8aa8; }
.cube-band { fill: #9494b2; }
.cube-hub { fill: #cfcfe0; stroke: #8a8aa8; }
.cube-t { font-family: "Liberation Sans", sans-serif; font-size: 10px; font-weight: 700; fill: #111; }
.axis-t { font-family: "Liberation Sans", sans-serif; font-size: 9px; }
.blue { fill: #1414d6; }
.green { fill: #2fe02f; }
.axis-s { font-family: "Liberation Sans", sans-serif; font-size: 8px; fill: #222; }

.doctabs { height: 28px; display: flex; }
.dtab { display: flex; align-items: center; box-sizing: border-box; font-size: 13px; white-space: nowrap; }
.dtab > svg { width: 20px; height: 20px; flex: none; }
.dtab-start { width: 159px; height: 26px; padding-left: 14px; border-bottom: 2px solid #d0d0d0; gap: 4px; }
.dtab-active { width: 185px; height: 29px; margin-top: -1px; background: #fff; border: 1px solid #dcdcdc; padding-left: 16px; gap: 3px; }
.dclose { width: 17px; height: 22px; display: flex; align-items: center; justify-content: center; background: #bbb; border: 1px solid #999; box-sizing: border-box; margin-left: auto; margin-right: 15px; flex: none; }
.dclose svg { width: 10px; height: 10px; }
.dclose.red { background: #dd6247; border-color: #b04530; margin-right: 17px; }

.status { height: 37px; display: flex; align-items: center; font-size: 13px; position: relative; }
.st-msg { padding-left: 2px; white-space: nowrap; }
.st-nav { margin-left: auto; width: 119px; box-sizing: border-box; height: 30px; border-left: 1px solid #d6d6d6; display: flex; align-items: center; padding-left: 19px; gap: 4px; overflow: hidden; white-space: nowrap; }
.st-nav svg { width: 16px; height: 16px; flex: none; }
.st-dim { width: 158px; box-sizing: border-box; height: 30px; line-height: 30px; border-left: 1px solid #d6d6d6; text-align: right; padding-right: 4px; white-space: nowrap; }
.ime-tip { position: absolute; left: 1706px; top: 12px; width: 109px; height: 25px; box-sizing: border-box; background: #fff; border: 1px solid #767676; font-size: 13.500px; line-height: 23px; text-align: center; color: #5c6f86; white-space: nowrap; }

.taskbar { height: 50px; display: flex; align-items: stretch; background: linear-gradient(90deg, #21343f 0%, #22343f 60%, #1a2b45 80%, #1a2945 100%); color: #fff; }
.win { width: 20px; height: 20px; margin: 15px 20px 15px 20px; flex: none; }
.search { width: 429px; flex: none; box-sizing: border-box; background: #f0f0f0; border-top: 1px solid #c6c6c6; display: flex; align-items: center; padding-left: 15px; gap: 12px; color: #333; font-size: 16px; }
.search svg { width: 22px; height: 22px; }
.tb-ic { width: 62px; flex: none; display: flex; align-items: center; justify-content: center; position: relative; }
.tb-ic svg { width: 30px; height: 30px; }
.tb-plain svg { width: 24px; height: 24px; }
.tb-ic.on::after { content: ""; position: absolute; left: 4px; right: 4px; bottom: 0; height: 3px; background: #66aef0; }
.tb-ic.active { background: #4a5a68; }
.tb-ic.active::after { left: 0; right: 0; }
.jp-ic { width: 29px; height: 29px; box-sizing: border-box; border: 2px solid #b9b92f; border-radius: 2px; background: repeating-linear-gradient(#fbeec4 0 3px, #f8dfa6 3px 6px); display: flex; align-items: center; justify-content: center; font: 700 18px "Liberation Mono", monospace; line-height: 1; letter-spacing: -2px; }
.jp-j { color: #2b94c8; }
.jp-p { color: #f0602c; }
.line-ic { width: 30px; height: 37px; border-radius: 7px; background: #00b900; display: flex; align-items: center; justify-content: center; }
.line-ic span { background: #fff; border-radius: 50%; width: 25px; height: 21px; font: 700 7.500px "Liberation Sans", sans-serif; color: #00b900; text-align: center; line-height: 21px; }

.tray { margin-left: auto; display: flex; align-items: center; font-size: 16px; white-space: nowrap; width: 497px; box-sizing: border-box; padding-left: 3px; }
.t-cloud { width: 28px; height: 18px; flex: none; margin-left: 1px; }
.t-temp { margin-left: 10px; width: 30px; }
.t-cond { margin-left: 4px; width: 40px; letter-spacing: -1px; }
.t-chev { width: 16px; height: 10px; margin-left: 22px; }
.t-ic { width: 20px; height: 16px; margin-left: 10px; flex: none; }
.t-ime { width: 28px; height: 50px; display: flex; align-items: center; justify-content: center; background: #2e3d54; margin-left: 6px; flex: none; }
.t-ime svg { width: 19px; height: 19px; }
.t-clock { width: 90px; margin-left: 1px; display: flex; flex-direction: column; align-items: center; font-size: 14px; line-height: 24px; }
.t-note { position: relative; margin-left: 17px; width: 20px; height: 20px; margin-top: -4px; }
.t-note svg { width: 20px; height: 18px; display: block; }
.t-badge { position: absolute; left: 10px; top: 9px; width: 18px; height: 18px; box-sizing: border-box; border: 2px solid #777; border-radius: 50%; background: #2d2d2d; font-size: 12px; line-height: 14px; font-weight: 700; text-align: center; }
</style>
